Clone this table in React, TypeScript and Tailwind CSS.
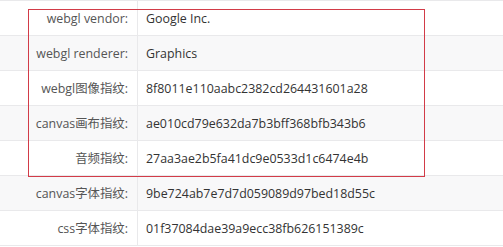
const rows: [string, string][] = [
  ['webgl vendor:', 'Google Inc.'],
  ['webgl renderer:', 'Graphics'],
  ['webgl图像指纹:', '8f8011e110aabc2382cd264431601a28'],
  ['canvas画布指纹:', 'ae010cd79e632da7b3bff368bfb343b6'],
  ['音频指纹:', '27aa3ae2b5fa41dc9e0533d1c6474e4b'],
  ['canvas字体指纹:', '9be724ab7e7d7d059089d97bed18d55c'],
  ['css字体指纹:', '01f37084dae39a9ecc38fb626151389c'],
];

export default function App() {
  return (
    <div
      className="relative w-[503px] h-[247px] overflow-hidden bg-white text-[12.4px]"
      style={{ fontFamily: '"Open Sans", "Noto Sans CJK SC", sans-serif' }}
    >
      {rows.map(([label, value], i) => (
        <div
          key={label}
          className={`flex h-[35px] border-t border-[#e9e9eb] ${i % 2 === 1 ? 'bg-[#f8f8f9]' : 'bg-white'}`}
        >
          <div className="w-[137px] shrink-0 flex items-center justify-end pr-[9px] pt-[3px] text-[#555]">
            {label}
          </div>
          <div className="flex-1 flex items-center border-l border-[#e9e9eb] pl-[8px] pt-[3px] text-[#333]">
            {value}
          </div>
        </div>
      ))}
      <div className="border-t border-[#e9e9eb]" />

      {/* highlight box */}
      <div className="absolute left-[28px] top-[9px] w-[397px] h-[168px] border border-[#d23b48] pointer-events-none" />
    </div>
  );
}
